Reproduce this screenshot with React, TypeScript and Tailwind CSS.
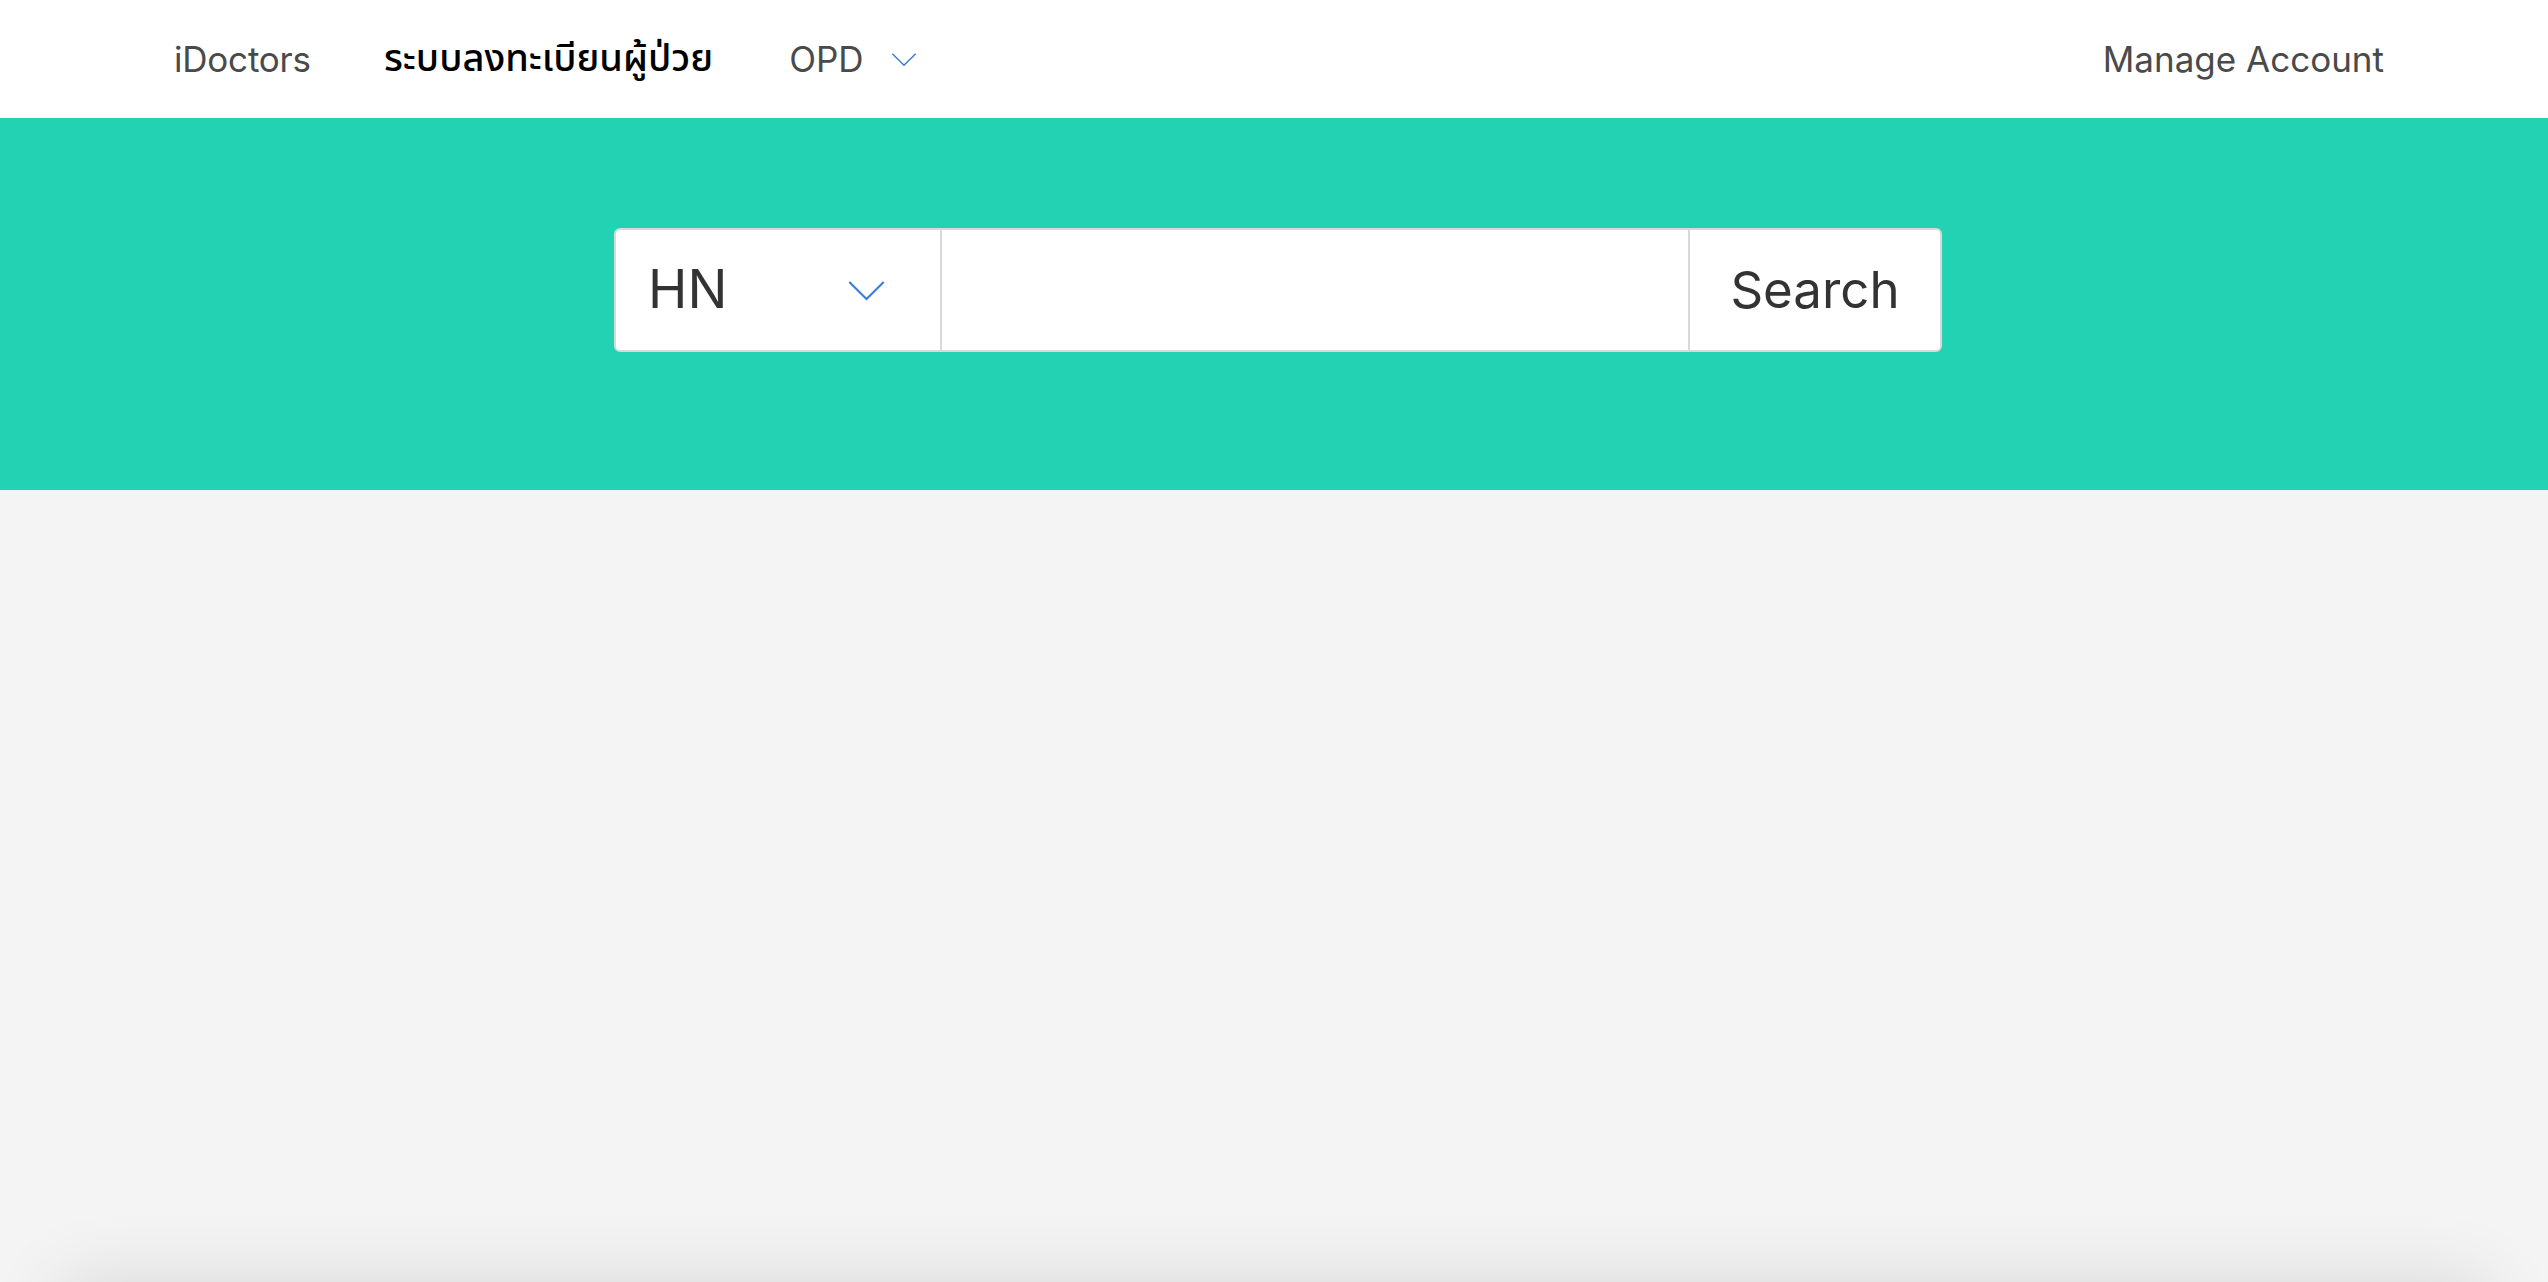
const navFont = { fontFamily: 'Inter, "Noto Sans", sans-serif' };

function Chevron({ className }: { className?: string }) {
  return (
    <svg className={className} viewBox="0 0 40 22" fill="none" aria-hidden="true">
      <path d="M2 2L20 20L38 2" stroke="currentColor" strokeWidth="2.2" strokeLinejoin="miter" />
    </svg>
  );
}

export default function App() {
  return (
    <div className="min-h-screen bg-[#f4f4f4] overflow-hidden" style={navFont}>
      {/* top menu */}
      <header className="h-[118px] bg-white flex items-center justify-between pl-[174px] pr-[164px]">
        <nav className="flex items-center">
          <a className="text-[35px] text-[#4a4a4a] tracking-[-0.2px] mr-[73px]">iDoctors</a>
          <a
            className="text-[38px] font-medium text-black mr-[76px]"
            style={{ fontFamily: '"Noto Sans Thai", Thonburi, "Noto Sans", sans-serif' }}
          >
            ระบบลงทะเบียนผู้ป่วย
          </a>
          <button type="button" className="flex items-center gap-[27px] text-[35px] text-[#4a4a4a]">
            OPD
            <Chevron className="w-[26px] h-[15px] text-[#3b7ddd]" />
          </button>
        </nav>
        <a className="text-[35px] text-[#4a4a4a]">Manage Account</a>
      </header>

      {/* search band */}
      <section className="h-[372px] bg-[#23d2b3] flex justify-center pt-[110px]">
        <div className="flex h-[124px] w-[1328px] ml-[8px] rounded-[6px] border-2 border-[#d9d9d9] bg-white overflow-hidden">
          <div className="w-[326px] shrink-0 flex items-center justify-between pl-[32px] pr-[54px] border-r-2 border-[#d9d9d9]">
            <span className="text-[53px] text-[#333333]">HN</span>
            <Chevron className="w-[39px] h-[21px] text-[#3b7ddd]" />
          </div>
          <input type="text" className="flex-1 min-w-0 outline-none px-[20px] text-[40px] text-[#333]" />
          <button
            type="button"
            className="w-[252px] shrink-0 border-l-2 border-[#d9d9d9] text-[51px] text-[#333333] flex items-center justify-center"
          >
            Search
          </button>
        </div>
      </section>

      {/* content card, starts just under the fold */}
      <div className="mt-[792px] mx-[60px] h-[400px] bg-[#f4f4f4] shadow-[0_0_70px_rgba(0,0,0,0.12)]" />
    </div>
  );
}
